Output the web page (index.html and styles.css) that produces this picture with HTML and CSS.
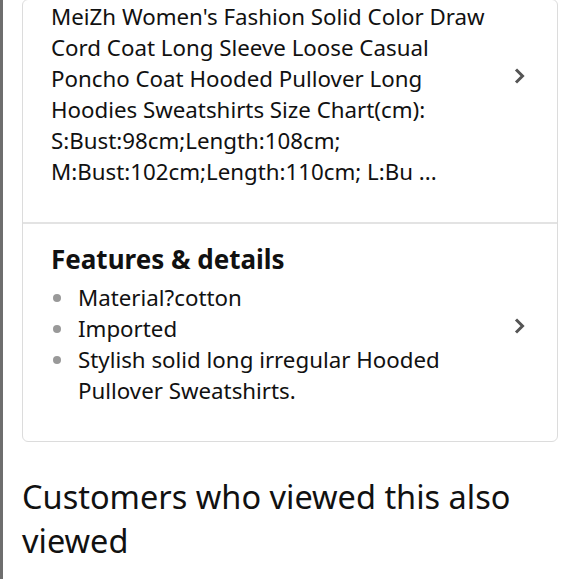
FILE: index.html
```html
<!DOCTYPE html>
<html>
<head>
<meta charset="utf-8">
<link rel="stylesheet" href="styles.css">
</head>
<body>
<div class="page">
  <div class="card">
    <div class="section first">
      <div class="content">
        <p class="desc">MeiZh Women's Fashion Solid Color Draw Cord Coat Long Sleeve Loose Casual Poncho Coat Hooded Pullover Long Hoodies Sweatshirts Size Chart(cm): S:Bust:98cm;Length:108cm; M:Bust:102cm;Length:110cm; L:Bu ...</p>
      </div>
      <svg class="chev" width="14" height="18" viewBox="0 0 14 18"><path d="M3 2.5 L9.5 9 L3 15.5" fill="none" stroke="#555" stroke-width="3"/></svg>
    </div>
    <div class="section">
      <div class="content">
        <h2 class="title">Features &amp; details</h2>
        <ul class="list">
          <li>Material?cotton</li>
          <li>Imported</li>
          <li>Stylish solid long irregular Hooded Pullover Sweatshirts.</li>
        </ul>
      </div>
      <svg class="chev" width="14" height="18" viewBox="0 0 14 18"><path d="M3 2.5 L9.5 9 L3 15.5" fill="none" stroke="#555" stroke-width="3"/></svg>
    </div>
  </div>
  <h1 class="also">Customers who viewed this also viewed</h1>
</div>
</body>
</html>
```
FILE: styles.css
```css
html, body {
  margin: 0;
  padding: 0;
  background: #fff;
}
body {
  font-family: "Noto Sans", "Liberation Sans", sans-serif;
  color: #111;
  overflow: hidden;
}
.page {
  border-left: 3px solid #6e6e6e;
  padding-left: 19px;
  padding-right: 22px;
  min-height: 580px;
  box-sizing: border-box;
}
.card {
  margin-top: -1px;
  border: 1px solid #dcdcdc;
  border-radius: 6px;
}
.section {
  display: flex;
  align-items: center;
  padding: 17px 30px 35px 28px;
}
.section.first {
  align-items: flex-start;
  padding-top: 1px;
}
.section.first .chev {
  margin-top: 66px;
}
.section + .section {
  border-top: 2px solid #e3e3e3;
}
.content {
  flex: 1;
}
.title {
  margin: 0;
  font-size: 26px;
  line-height: 36px;
  font-weight: 700;
  color: #111;
}
.desc {
  margin: 0;
  width: 450px;
  font-size: 22.3px;
  line-height: 31px;
}
.list {
  margin: 5px 0 0;
  padding: 0;
  list-style: none;
  width: 420px;
}
.list li {
  position: relative;
  padding-left: 27px;
  font-size: 22.3px;
  line-height: 31px;
}
.list li::before {
  content: "";
  position: absolute;
  left: 2px;
  top: 12px;
  width: 8px;
  height: 8px;
  border-radius: 50%;
  background: #999;
}
.chev {
  flex: none;
  margin-left: 12px;
  margin-top: 5px;
}
.also {
  margin: 33px 0 0;
  font-size: 32.5px;
  line-height: 44px;
  font-weight: 400;
  color: #111;
}
```
